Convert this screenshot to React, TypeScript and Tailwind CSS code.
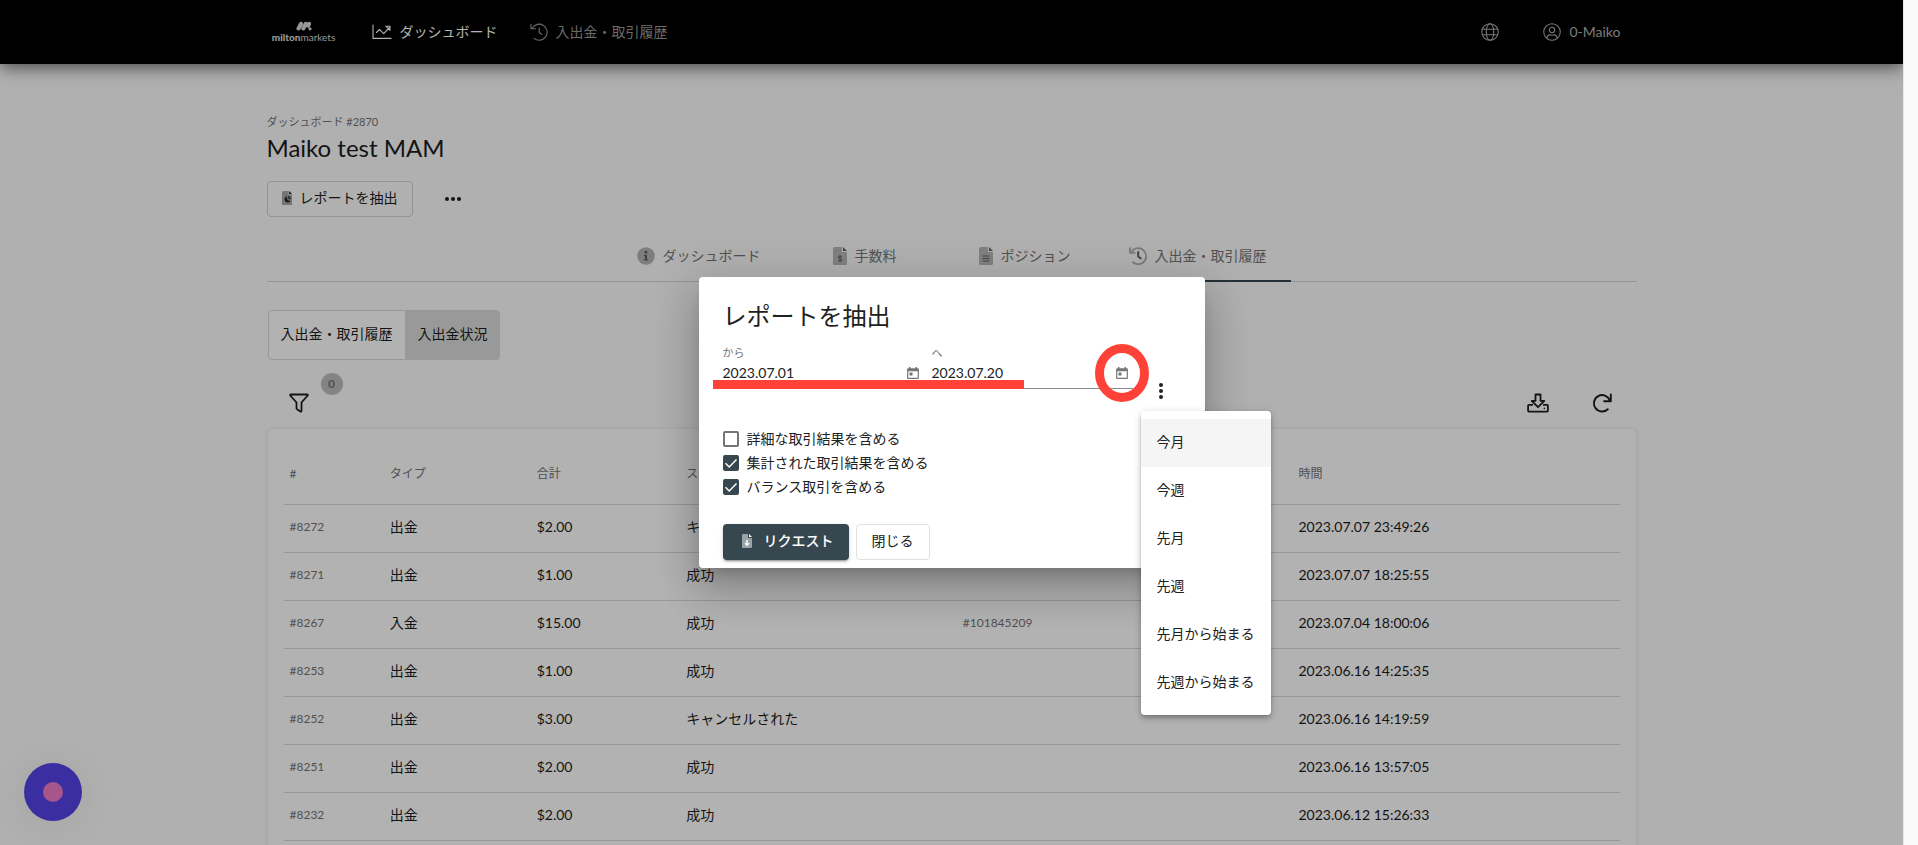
import { useState } from "react";
import type { ReactNode } from "react";

const tabs = [
    { label: "ダッシュボード", icon: <InfoIcon />, active: false },
    { label: "手数料", icon: <FileIcon mark="dollar" />, active: false },
    { label: "ポジション", icon: <FileIcon mark="lines" />, active: false },
    { label: "入出金・取引履歴", icon: <HistoryIcon className="w-[18px] h-[18px] text-[#b4b4b4]" bold />, active: true },
];

const rows = [
    { id: "#8272", type: "出金", total: "$2.00", status: "キャンセルされた", account: "", time: "2023.07.07 23:49:26" },
    { id: "#8271", type: "出金", total: "$1.00", status: "成功", account: "", time: "2023.07.07 18:25:55" },
    { id: "#8267", type: "入金", total: "$15.00", status: "成功", account: "#101845209", time: "2023.07.04 18:00:06" },
    { id: "#8253", type: "出金", total: "$1.00", status: "成功", account: "", time: "2023.06.16 14:25:35" },
    { id: "#8252", type: "出金", total: "$3.00", status: "キャンセルされた", account: "", time: "2023.06.16 14:19:59" },
    { id: "#8251", type: "出金", total: "$2.00", status: "成功", account: "", time: "2023.06.16 13:57:05" },
    { id: "#8232", type: "出金", total: "$2.00", status: "成功", account: "", time: "2023.06.12 15:26:33" },
];

const options = [
    { id: "detailed", label: "詳細な取引結果を含める", checked: false },
    { id: "summary", label: "集計された取引結果を含める", checked: true },
    { id: "balance", label: "バランス取引を含める", checked: true },
];

const periods = ["今月", "今週", "先月", "先週", "先月から始まる", "先週から始まる"];

/* ---------- Icons ---------- */

function ChartIcon() {
    return (
        <svg viewBox="0 0 20 16" className="w-5 h-4" fill="none" stroke="currentColor" strokeWidth="1.1" strokeLinecap="round" strokeLinejoin="round">
            <path d="M1 1v13.4h18" />
            <path d="M4.500 8.500 7.500 5.500l4.200 4.200L17.500 3.500M13.800 2.200h4.200v4.200z" />
        </svg>
    );
}

function HistoryIcon({ className, bold }: { className: string; bold?: boolean }) {
    return (
        <svg viewBox="0 0 18 18" className={className} fill="none" stroke="currentColor" strokeLinecap="round" strokeLinejoin="round">
            <path strokeWidth={bold ? 2 : 1.1} d="M2.200 5.200A8 8 0 1 1 4 15.300" />
            <path strokeWidth={bold ? 2 : 1.1} d="M1 1.200v4.600h4.600" />
            <path strokeWidth={bold ? 2 : 1.1} stroke={bold ? "#616161" : "currentColor"} d="M9.200 5v4.500l2.600 2" />
        </svg>
    );
}

function GlobeIcon() {
    return (
        <svg viewBox="0 0 20 20" className="w-[18px] h-[18px]" fill="none" stroke="currentColor" strokeWidth="1.2">
            <circle cx="10" cy="10" r="9.200" />
            <ellipse cx="10" cy="10" rx="4.200" ry="9.200" />
            <path d="M1.500 7h17M1.500 13h17" />
        </svg>
    );
}

function UserIcon() {
    return (
        <svg viewBox="0 0 20 20" className="w-[18px] h-[18px]" fill="none" stroke="currentColor" strokeWidth="1.200">
            <circle cx="10" cy="10" r="9.200" />
            <circle cx="10" cy="7.800" r="3" />
            <path d="M4.200 17c.4-2.600 1.800-3.800 3.500-3.800.8 0 1.300.4 2.300.4s1.500-.4 2.300-.4c1.700 0 3.100 1.200 3.500 3.800" />
        </svg>
    );
}

function InfoIcon() {
    return (
        <svg viewBox="0 0 18 18" className="w-[18px] h-[18px]">
            <circle cx="9" cy="9" r="8.800" fill="#b4b4b4" />
            <circle cx="9" cy="5.200" r="1.400" fill="#616161" />
            <path d="M7 7.800h3v4.400h1.200v1.400H6.800v-1.400H8V9.200H7z" fill="#616161" />
        </svg>
    );
}

function FileIcon({ mark }: { mark: "dollar" | "lines" }) {
    return (
        <svg viewBox="0 0 14 18" className="w-[14px] h-[18px]">
            <path d="M1.500 0H9v5h5v11.500a1.500 1.500 0 0 1-1.500 1.500h-11A1.500 1.500 0 0 1 0 16.500v-15A1.500 1.500 0 0 1 1.500 0z" fill="#b8b8b8" />
            <path d="M10 0l4 4h-4z" fill="#616161" />
            {mark === "lines" ? (
                <path d="M3.500 9h7M3.500 11.500h7M3.500 14h7" stroke="#616161" strokeWidth="1" />
            ) : (
                <path d="M8.800 9.600c-1-.8-3.400-.8-3.400.6 0 1.500 3.400 1 3.400 2.600 0 1.400-2.500 1.400-3.600.5M7 8v7.200" stroke="#616161" strokeWidth="1" fill="none" />
            )}
        </svg>
    );
}

function ReportIcon() {
    return (
        <svg viewBox="0 0 10 14" className="w-[10px] h-[14px]">
            <path d="M1 0h5.500v3.500H10V14H0V1z" fill="#a6a6a6" />
            <path d="M7 0l3 3H7z" fill="#222" />
            <path d="M4.300 5.300a3.300 3.300 0 1 0 4.300 4.700l-3-.8z" fill="#222" />
            <path d="M5.800 4.800v3.500h3.200a3.200 3.200 0 0 0-3.200-3.500z" fill="#555" />
        </svg>
    );
}

function FileDownloadIcon() {
    return (
        <svg viewBox="0 0 10 14" className="w-[10px] h-[14px]">
            <path d="M1 0h5v4h4v9a1 1 0 0 1-1 1H1a1 1 0 0 1-1-1V1a1 1 0 0 1 1-1z" fill="#9aa3a7" />
            <path d="M7 0l3 3H7z" fill="#fff" />
            <path d="M4.300 6h1.400v3.200h2L5 12.200 2.300 9.200h2z" fill="#fff" />
        </svg>
    );
}

function FilterIcon() {
    return (
        <svg viewBox="0 0 20 20" className="w-5 h-5" fill="none" stroke="currentColor" strokeWidth="1.800" strokeLinejoin="round">
            <path d="M1.800 1.500h16.400c.6 0 .9.600.5 1L12.500 9.500v8.200c0 .7-.7 1-1.200.7l-3.200-2.200a1 1 0 0 1-.6-.9V9.500L1.300 2.500c-.4-.4-.1-1 .5-1z" />
        </svg>
    );
}

function DownloadIcon() {
    return (
        <svg viewBox="0 0 22 20" className="w-[22px] h-5" fill="none" stroke="currentColor" strokeWidth="1.800" strokeLinejoin="round">
            <path d="M8.500 1.500h5v6.300h3.800L11 14.200 4.700 7.800h3.800z" />
            <path d="M6 11.800H1.900a.8.8 0 0 0-.8.8v5.200c0 .5.300.8.800.8h18.200c.5 0 .8-.3.8-.8v-5.200a.8.8 0 0 0-.8-.8H16" />
            <circle cx="17.300" cy="15.400" r=".8" fill="currentColor" stroke="none" />
        </svg>
    );
}

function RefreshIcon() {
    return (
        <svg viewBox="0 0 20 20" className="w-5 h-5" fill="none" stroke="currentColor" strokeWidth="1.900" strokeLinecap="round">
            <path d="M15.800 16.200A8.200 8.200 0 1 1 17.800 7.500" />
            <path d="M18.800 1.500v6.700h-6.700" strokeLinejoin="round" />
        </svg>
    );
}

function CalendarIcon() {
    return (
        <svg viewBox="0 0 12 14" className="w-3 h-[14px] text-[#757575]" fill="currentColor">
            <path fillRule="evenodd" d="M2 1h1.500v1.300h5V1H10v1.300h.8c.6 0 1.100.5 1.100 1.100v8.500c0 .6-.5 1.100-1.100 1.100H1.200C.6 13 .1 12.500.1 11.900V3.400c0-.6.500-1.100 1.100-1.100H2zM1.300 5.200v6.600h9.400V5.200zM2.500 6.600h3v3h-3z" />
        </svg>
    );
}

function Logo() {
    return (
        <a href="#home" aria-label="miltonmarkets" className="flex w-16 flex-col items-center text-[#d8d8d8]">
            <svg viewBox="0 0 16 10" className="w-4 h-[10px]" stroke="currentColor" strokeLinecap="round">
                <path d="M2.500 7.500 5 2.800M7.300 7.500 9.800 2.800M12.200 4.800l.9-2" strokeWidth="4" />
                <circle cx="14" cy="7.800" r="1.600" fill="currentColor" stroke="none" />
            </svg>
            <span className="text-[10px] leading-3">
                <b className="font-black">milton</b>markets
            </span>
        </a>
    );
}

/* ---------- Page ---------- */

function Header() {
    return (
        <header className="relative h-16 bg-black shadow-[0_3px_16px_rgba(0,0,0,0.6)]">
            <div className="mx-auto flex h-full max-w-[1370px] items-center pl-[5px] pr-4">
                <Logo />
                <nav className="ml-9 flex items-center gap-8 text-sm">
                    <a href="#dashboard" className="flex items-center gap-2 text-white">
                        <ChartIcon />
                        ダッシュボード
                    </a>
                    <a href="#history" className="flex items-center gap-2 text-[#9a9a9a]">
                        <HistoryIcon className="w-[18px] h-[18px]" />
                        入出金・取引履歴
                    </a>
                </nav>
                <div className="ml-auto flex items-center gap-11 text-[#b0b0b0]">
                    <button type="button" aria-label="言語">
                        <GlobeIcon />
                    </button>
                    <button type="button" className="flex items-center gap-2 text-sm">
                        <UserIcon />
                        0-Maiko
                    </button>
                </div>
            </div>
        </header>
    );
}

function TransactionsTable() {
    return (
        <div className="rounded-md border border-[#f2f2f2] bg-white px-4 pb-12 pt-3 shadow-[0_0_4px_rgba(0,0,0,0.06)]">
            <table className="w-full table-fixed border-collapse text-left text-sm text-[#1c1c1c]">
                <thead>
                    <tr className="h-[63px] border-b border-[#dadada] text-xs text-[#757575]">
                        <th className="w-[7.5%] px-1.5 pt-1 font-normal">#</th>
                        <th className="w-[11%] px-1.5 pt-1 font-normal">タイプ</th>
                        <th className="w-[11.2%] px-1.5 pt-1 font-normal">合計</th>
                        <th className="w-[20.7%] px-1.5 pt-1 font-normal">ステータス</th>
                        <th className="w-[25.2%] px-1.5 pt-1 font-normal">口座</th>
                        <th className="px-[5px] pt-1 font-normal">時間</th>
                    </tr>
                </thead>
                <tbody>
                    {rows.map((row) => (
                        <tr key={row.id} className="h-12 border-b border-[#dadada]">
                            <td className="px-1.5 pb-0.5 text-xs text-[#757575]">{row.id}</td>
                            <td className="px-1.5 pb-0.5">{row.type}</td>
                            <td className="px-1.5 pb-0.5">{row.total}</td>
                            <td className="px-1.5 pb-0.5">{row.status}</td>
                            <td className="px-1.5 pb-0.5 text-xs text-[#757575]">{row.account}</td>
                            <td className="px-[5px] pb-0.5">{row.time}</td>
                        </tr>
                    ))}
                </tbody>
            </table>
        </div>
    );
}

function Dashboard() {
    return (
        <main className="mx-auto max-w-[1370px] pt-12 text-[#1c1c1c]">
            <p className="text-[11px] leading-5 text-[#757575]">ダッシュボード #2870</p>
            <h1 className="text-2xl leading-8">Maiko test MAM</h1>
            <div className="mt-[17px] flex items-center gap-8">
                <button type="button" className="flex h-9 items-center gap-2 rounded-sm border border-[#d5d5d5] px-[14px] pb-0.5 text-sm">
                    <ReportIcon />
                    レポートを抽出
                </button>
                <button type="button" aria-label="その他" className="flex gap-0.5">
                    <i className="size-1 rounded-full bg-[#1c1c1c]" />
                    <i className="size-1 rounded-full bg-[#1c1c1c]" />
                    <i className="size-1 rounded-full bg-[#1c1c1c]" />
                </button>
            </div>

            <div role="tablist" className="mt-4 flex h-[49px] justify-center border-b border-[#d5d5d5]">
                {tabs.map((tab) => (
                    <button
                        key={tab.label}
                        type="button"
                        role="tab"
                        aria-selected={tab.active}
                        className={`-mb-px flex min-w-40 items-center justify-center gap-2 px-6 pb-0.5 text-sm text-[#757575] border-b-2 ${
                            tab.active ? "border-[#37474f]" : "border-transparent"
                        }`}
                    >
                        {tab.icon}
                        {tab.label}
                    </button>
                ))}
            </div>

            <div className="ml-px mt-7 flex h-[50px] text-sm">
                <button type="button" className="rounded-l-sm border border-[#dadada] bg-white px-3 pb-0.5">
                    入出金・取引履歴
                </button>
                <button type="button" className="rounded-r-sm bg-[#dcdcdc] px-3 pb-0.5">
                    入出金状況
                </button>
            </div>

            <div className="flex h-[68px] items-center pl-[22px] pr-[25px] pt-[17px]">
                <button type="button" aria-label="フィルター" className="relative">
                    <FilterIcon />
                    <span className="absolute -top-5 left-8 flex size-[22px] items-center justify-center rounded-full bg-[#bdbdbd] text-xs font-bold text-[#757575]">
                        0
                    </span>
                </button>
                <div className="ml-auto flex items-center gap-[43px]">
                    <button type="button" aria-label="ダウンロード">
                        <DownloadIcon />
                    </button>
                    <button type="button" aria-label="更新">
                        <RefreshIcon />
                    </button>
                </div>
            </div>

            <TransactionsTable />
        </main>
    );
}

/* ---------- Report dialog ---------- */

function DateField({ id, label, value, children }: { id: string; label: string; value: string; children?: ReactNode }) {
    return (
        <div className="flex-1">
            <label htmlFor={id} className="block text-[11px] leading-4 text-[#757575]">
                {label}
            </label>
            <div className="flex h-7 items-center border-b border-[#8c8c8c] pb-1">
                <input id={id} defaultValue={value} className="min-w-0 flex-1 text-sm outline-none" />
                <button type="button" aria-label={`${label} カレンダー`} className="relative mr-[5px]">
                    <CalendarIcon />
                    {children}
                </button>
            </div>
        </div>
    );
}

function ReportDialog() {
    const [checked, setChecked] = useState(() => options.map((o) => o.checked));

    return (
        <div
            role="dialog"
            aria-label="レポートを抽出"
            className="relative w-[506px] rounded bg-white px-6 pb-2 pt-6 text-[#212121] shadow-[0_11px_15px_-7px_rgba(0,0,0,0.2),0_24px_38px_3px_rgba(0,0,0,0.14),0_9px_46px_8px_rgba(0,0,0,0.12)]"
        >
            <h2 className="text-2xl leading-[30px]">レポートを抽出</h2>

            <div className="mt-[14px] flex items-end pr-4">
                <div className="relative flex flex-1 gap-2">
                    <DateField id="from" label="から" value="2023.07.01" />
                    <DateField id="to" label="へ" value="2023.07.20">
                        <svg viewBox="0 0 54 58" className="absolute -left-[21px] -top-[22px] h-[58px] w-[54px]" fill="none">
                            <ellipse cx="27" cy="29" rx="22.500" ry="24.500" stroke="#ff4237" strokeWidth="9" />
                        </svg>
                    </DateField>
                    <span className="absolute -left-[10px] bottom-0 h-[9px] w-[311px] bg-[#ff4237]" />
                </div>
                <div className="relative -mb-4 ml-6">
                    <button type="button" aria-label="期間" className="flex h-[29px] w-2 flex-col items-center justify-center gap-[2px]">
                        <i className="size-1 rounded-full bg-[#212121]" />
                        <i className="size-1 rounded-full bg-[#212121]" />
                        <i className="size-1 rounded-full bg-[#212121]" />
                    </button>
                    <ul className="absolute -left-4 top-[35px] rounded bg-white py-2 text-sm shadow-[0_2px_4px_-1px_rgba(0,0,0,0.2),0_4px_5px_rgba(0,0,0,0.14),0_1px_10px_rgba(0,0,0,0.12)]">
                        {periods.map((period, i) => (
                            <li key={period}>
                                <button
                                    type="button"
                                    className={`block h-12 w-full whitespace-nowrap px-4 pb-0.5 text-left ${i === 0 ? "bg-[#f5f5f5]" : "bg-white"}`}
                                >
                                    {period}
                                </button>
                            </li>
                        ))}
                    </ul>
                </div>
            </div>

            <div className="mt-[38px] flex flex-col">
                {options.map((option, i) => (
                    <label key={option.id} htmlFor={option.id} className="flex h-6 items-center gap-2 text-sm">
                        <span className="relative size-4">
                            <input
                                id={option.id}
                                type="checkbox"
                                checked={checked[i]}
                                onChange={() => setChecked(checked.map((c, j) => (j === i ? !c : c)))}
                                className="block size-4 appearance-none rounded-xs border-2 border-[#757575] checked:border-[#37474f] checked:bg-[#37474f]"
                            />
                            {checked[i] && (
                                <svg viewBox="0 0 16 16" className="pointer-events-none absolute inset-0 size-4" fill="none" stroke="#fff" strokeWidth="1.500">
                                    <path d="M2.500 8.300 6.200 12 13.500 4.500" />
                                </svg>
                            )}
                        </span>
                        {option.label}
                    </label>
                ))}
            </div>

            <div className="mt-[25px] flex gap-[7px] text-sm">
                <button
                    type="button"
                    className="flex h-9 items-center gap-3 rounded bg-[#37474f] pb-0.5 pl-[19px] pr-[15px] font-medium text-white shadow-[0_3px_1px_-2px_rgba(0,0,0,0.2),0_2px_2px_rgba(0,0,0,0.14),0_1px_5px_rgba(0,0,0,0.12)]"
                >
                    <FileDownloadIcon />
                    リクエスト
                </button>
                <button type="button" className="h-9 rounded border border-[#e0e0e0] px-[15px] pb-0.5">
                    閉じる
                </button>
            </div>
        </div>
    );
}

export default function App() {
    return (
        <div className="flex h-screen overflow-hidden font-[Lato,'Noto_Sans_CJK_JP',sans-serif]">
            <div className="relative flex-1 overflow-hidden bg-[#fcfcfc]">
                <Header />
                <Dashboard />
                <button
                    type="button"
                    aria-label="チャット"
                    className="absolute bottom-6 left-6 flex size-[58px] items-center justify-center rounded-full bg-[#5443e6] shadow-[0_4px_40px_rgba(0,0,0,0.08)]"
                >
                    <span className="size-5 rounded-full bg-[#f07cc8]" />
                </button>

                {/* Backdrop */}
                <div className="absolute inset-0 flex items-center justify-center bg-black/30">
                    <ReportDialog />
                </div>
            </div>
            {/* Scrollbar track */}
            <div className="w-[15px] shrink-0 border-l border-[#e8e8e8] bg-[#fafafa]" />
        </div>
    );
}
